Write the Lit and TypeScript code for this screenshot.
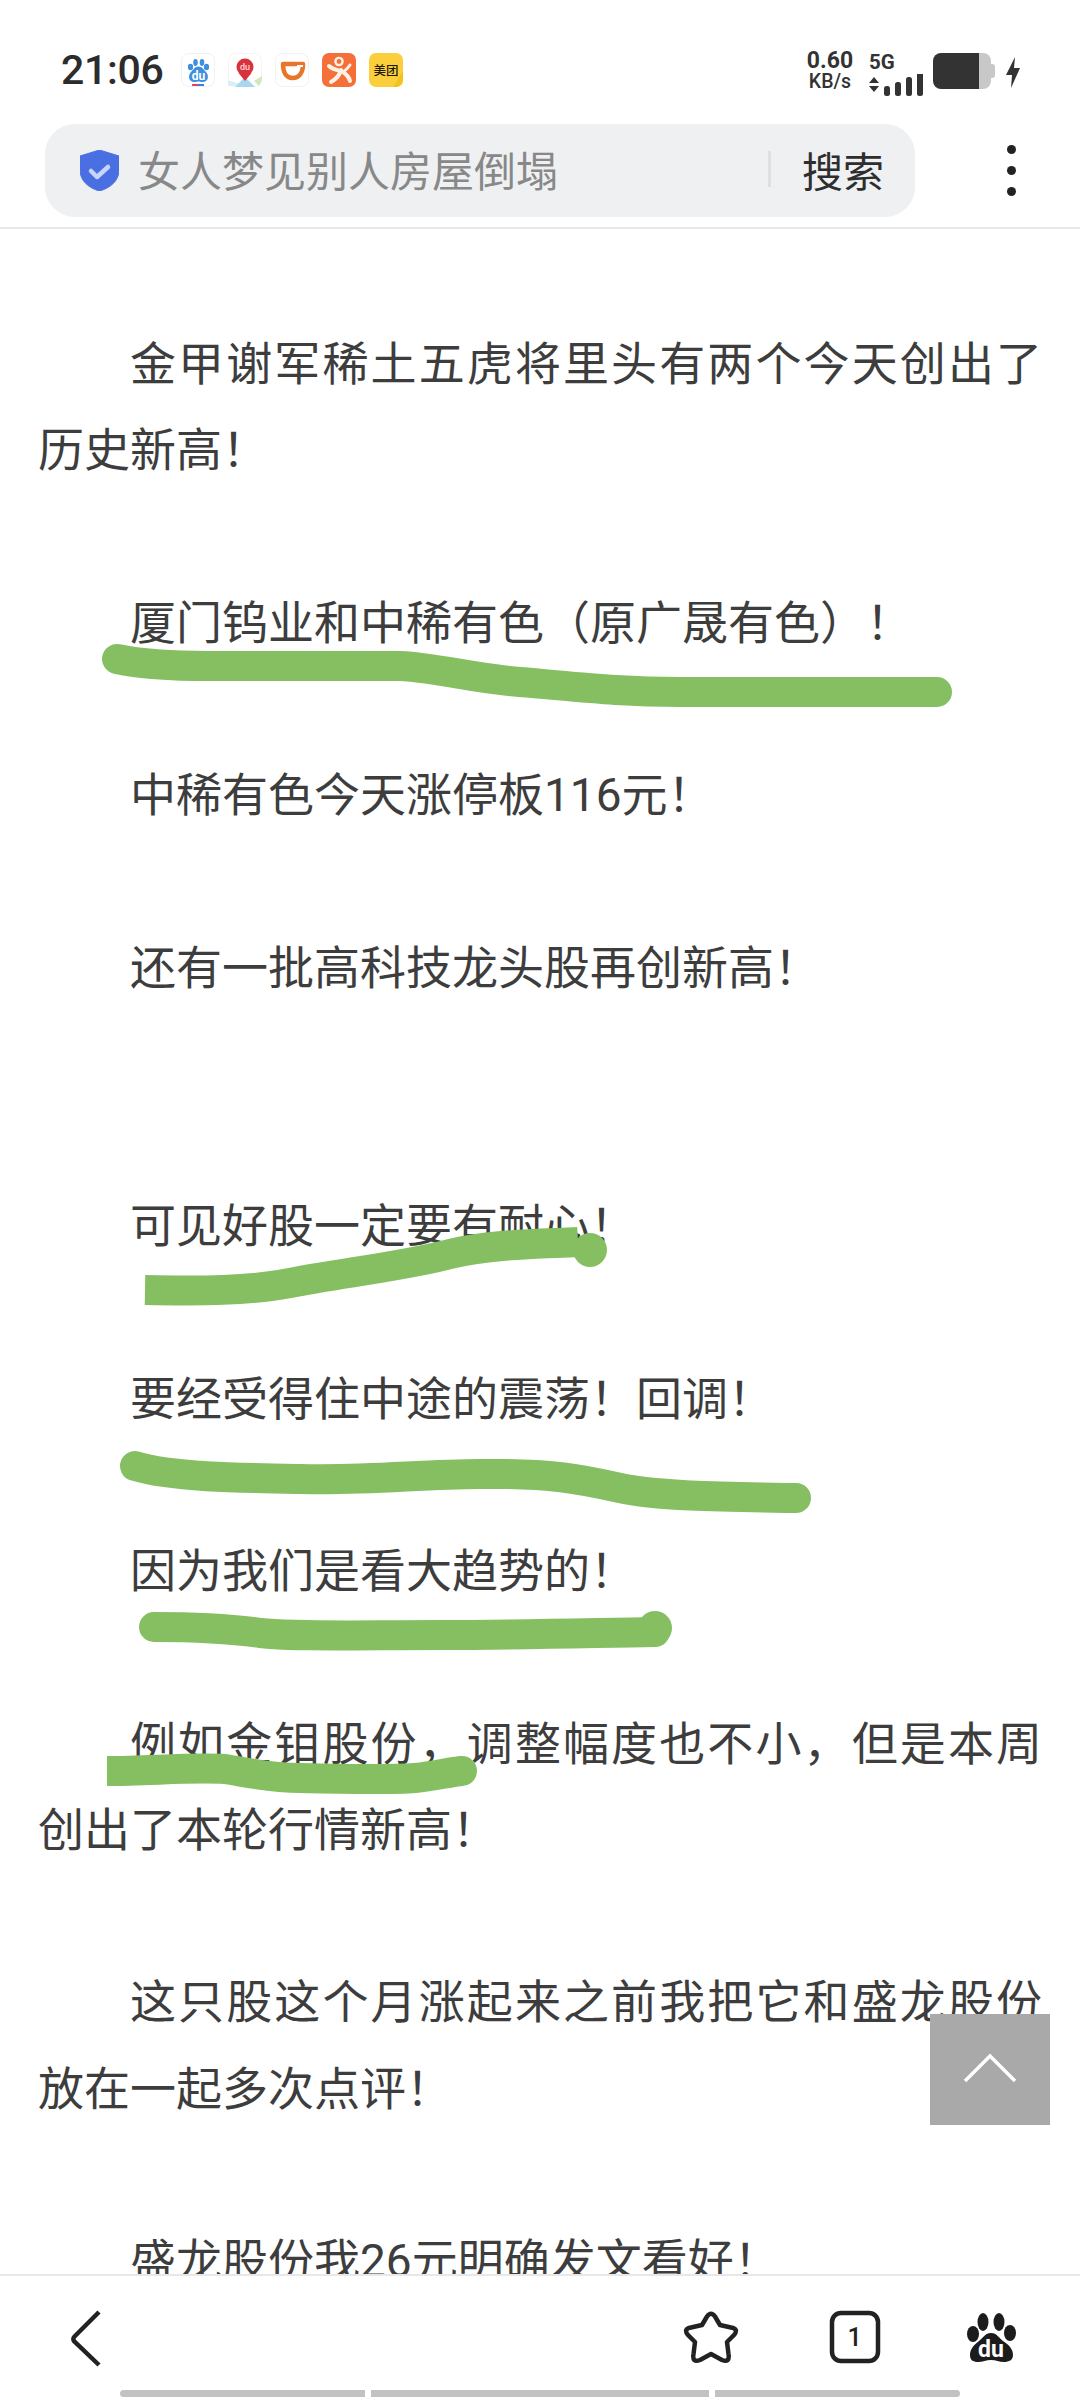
import { LitElement, html, css, svg } from "lit";
import { customElement } from "lit/decorators.js";

const paragraphs: (string | null)[] = [
  "金甲谢军稀土五虎将里头有两个今天创出了历史新高！",
  "厦门钨业和中稀有色（原广晟有色）！",
  "中稀有色今天涨停板116元！",
  "还有一批高科技龙头股再创新高！",
  null,
  "可见好股一定要有耐心！",
  "要经受得住中途的震荡！回调！",
  "因为我们是看大趋势的！",
  "例如金钼股份，调整幅度也不小，但是本周创出了本轮行情新高！",
  "这只股这个月涨起来之前我把它和盛龙股份放在一起多次点评！",
  "盛龙股份我26元明确发文看好！",
];

@customElement("app-root")
export class AppRoot extends LitElement {
  static styles = css`
    :host {
      display: block;
      position: relative;
      width: 1080px;
      height: 2400px;
      overflow: hidden;
      background: #fff;
      font-family: "Noto Sans CJK SC", "Noto Sans", sans-serif;
      color: #333;
    }
    .page { display: flex; flex-direction: column; height: 2400px; }
    .status { height: 124px; box-sizing: border-box; padding: 53px 60px 0 61px; display: flex; flex: none; }
    .time { font: 500 41px/34px Roboto, sans-serif; color: #2c2c2c; width: 120px; letter-spacing: -0.3px; }
    .apps { display: flex; gap: 13px; height: 34px; }
    .apps svg { width: 34px; height: 34px; display: block; }
    .spacer { flex: 1; }
    .net { width: 50px; display: flex; flex-direction: column; align-items: center; font-family: Roboto, sans-serif; color: #333; margin: -3px 11px 0 -3px; white-space: nowrap; }
    .net b { font: 700 23px/22px Roboto, sans-serif; }
    .net span { font: 500 19.500px/16px Roboto, sans-serif; margin-top: 2px; }
    .sig { width: 55px; margin-right: 9px; margin-left: 3px; }
    .sig .g { font: 700 20.500px/19px Roboto, sans-serif; color: #333; display: block; }
    .sig svg { display: block; margin-top: 2px; }
    .batt { display: block; margin-right: 10px; }
    .toolbar { height: 105px; flex: none; box-sizing: border-box; border-bottom: 2px solid #e8e8e8; display: flex; align-items: flex-start; padding-left: 45px; }
    .pill { width: 870px; height: 93px; background: #eff0f2; border-radius: 30px; display: flex; align-items: center; box-sizing: border-box; padding: 0 0 3px 35px; flex: none; }
    .pill svg { display: block; flex: none; margin-top: 3px; }
    .ph { font-size: 42px; color: #888; margin-left: 19px; width: 630px; white-space: nowrap; line-height: 60px; }
    .div { width: 3px; height: 36px; background: #dedfe1; flex: none; }
    .go { font-size: 41px; color: #2e2e2e; margin-left: 31px; white-space: nowrap; line-height: 60px; }
    .dots { width: 9px; margin: 21px 0 0 92px; display: flex; flex-direction: column; gap: 12px; }
    .dots i { width: 9px; height: 9px; border-radius: 50%; background: #222; display: block; }
    .content { flex: 1; overflow: hidden; box-sizing: border-box; padding: 92px 38px 0; min-height: 0; font-family: Roboto, "Noto Sans CJK SC", sans-serif; }
    .content p { margin: 0 0 86px; font-size: 46px; line-height: 86.4px; text-indent: 92px; text-align: justify; color: #3d3d3d; }
    .content p.blank { margin: 0; height: 86.4px; }
    .nav { height: 126px; flex: none; box-sizing: border-box; border-top: 2px solid #e8e8e8; background: #fff; position: relative; z-index: 3; display: flex; flex-direction: column; }
    .icons { display: flex; align-items: flex-start; padding: 34px 0 0 70px; height: 80px; box-sizing: border-box; flex: none; }
    .icons svg { display: block; flex: none; }
    .bars { display: flex; gap: 6px; padding-left: 120px; margin-top: 34px; }
    .bars i { display: block; height: 7px; background: #c2c2c2; }
    .bars i:first-child { width: 245px; border-radius: 4px 0 0 4px; }
    .bars i:nth-child(2) { width: 338px; }
    .bars i:last-child { width: 245px; border-radius: 0 4px 4px 0; }
    .ink { position: absolute; inset: 0; width: 1080px; height: 2400px; z-index: 1; pointer-events: none; }
    .top { position: absolute; left: 930px; top: 2014px; width: 120px; height: 111px; background: #a9a9a9; z-index: 2; display: flex; align-items: center; justify-content: center; }
    .top svg { display: block; margin-bottom: 4px; }
    .star { margin-left: 580px; }
    .tab { margin-left: 89px; }
    .paw { margin-left: 82px; }
  `;

  private appIcons() {
    return html`
      <div class="apps">
        <svg viewBox="0 0 34 34">
          <rect x=".5" y=".5" width="33" height="33" rx="7" fill="#fff" stroke="#f0f0f0"/>
          <g fill="#3d8fe0">
            <ellipse cx="9.500" cy="14" rx="2.600" ry="3.200"/><ellipse cx="14.500" cy="9.500" rx="2.300" ry="3.400"/>
            <ellipse cx="21" cy="9.500" rx="2.300" ry="3.400"/><ellipse cx="25.500" cy="14" rx="2.600" ry="3.200"/>
            <path d="M17.500 13.500c3.500 0 5 3 7.500 5.500 3 3 3 10-3.500 10-2 0-2.500-.6-4-.6s-2.500.6-4 .6c-6.500 0-6.500-7-3.500-10 2.500-2.500 4-5.500 7.500-5.500z"/>
          </g>
          <text x="17.500" y="27" text-anchor="middle" font-family="Roboto" font-weight="700" font-size="12" fill="#fff">du</text>
          <rect x="11" y="31" width="6" height="2" fill="#e0475a"/><rect x="17" y="31" width="6" height="2" fill="#4a76d8"/>
        </svg>
        <svg viewBox="0 0 34 34">
          <rect x=".5" y=".5" width="33" height="33" rx="7" fill="#fff" stroke="#f4f4f4"/>
          <path d="M0 27 17 33H0z" fill="#d8eef8"/><path d="M7 34 17 24l10 10z" fill="#a8d8f0"/><path d="M26 28l8-5v4l-3 6z" fill="#cfe8c0"/>
          <circle cx="17" cy="14" r="8.500" fill="#d8323f"/><path d="M10.500 20l6.500 8 6.500-8z" fill="#d8323f"/>
          <text x="17" y="17" text-anchor="middle" font-family="Roboto" font-size="9" font-weight="500" fill="#ffd5d5">du</text>
        </svg>
        <svg viewBox="0 0 34 34">
          <rect x=".5" y=".5" width="33" height="33" rx="7" fill="#fff" stroke="#f2f2f2"/>
          <path d="M8 11h20c0 9-4 14-10.500 14C11 25 8 19 8 11z" fill="none" stroke="#e8762a" stroke-width="4.500" stroke-linejoin="round"/>
          <path d="M22 12h6v2h-6z" fill="#fff"/>
        </svg>
        <svg viewBox="0 0 34 34">
          <rect width="34" height="34" rx="7" fill="#f56f38"/>
          <circle cx="17" cy="8.500" r="3.600" fill="none" stroke="#fdf1e6" stroke-width="2.400"/>
          <path d="M7 13C11 17 17 17 21 19 24 21 27 24 28 28" fill="none" stroke="#fdf1e6" stroke-width="4" stroke-linecap="round"/>
          <path d="M19 17C18 22 14 26 9 29" fill="none" stroke="#fdf1e6" stroke-width="4" stroke-linecap="round"/>
          <path d="M21 19C24 17 26 15 28 12" fill="none" stroke="#fdf1e6" stroke-width="3" stroke-linecap="round"/>
        </svg>
        <svg viewBox="0 0 34 34">
          <rect width="34" height="34" rx="7" fill="#fbcf3c"/>
          <path d="M34 18v9a7 7 0 0 1-7 7h-3z" fill="#f4c21c"/>
          <text x="17" y="21.500" text-anchor="middle" font-family="Noto Sans CJK SC" font-size="12.500" font-weight="500" fill="#1f1a05">美团</text>
        </svg>
      </div>`;
  }

  render() {
    return html`
      <div class="page">
        <div class="status">
          <div class="time">21:06</div>
          ${this.appIcons()}
          <div class="spacer"></div>
          <div class="net"><b>0.60</b><span>KB/s</span></div>
          <div class="sig">
            <span class="g">5G</span>
            <svg width="55" height="24" viewBox="0 0 55 24">
              <path d="M0 8l5-6 5 6zM0 11l5 6 5-6z" fill="#333" transform="translate(0 1)"/>
              <rect x="15" y="12" width="6" height="10" rx="2.500" fill="#333"/>
              <rect x="26" y="8" width="6" height="14" rx="2.500" fill="#333"/>
              <rect x="37" y="3" width="6" height="19" rx="2.500" fill="#333"/>
              <rect x="48" y="-2" width="6" height="24" rx="2.500" fill="#333"/>
            </svg>
          </div>
          <svg class="batt" width="63" height="36" viewBox="0 0 63 36">
            <path d="M46 0h4a8 8 0 0 1 8 8v20a8 8 0 0 1-8 8h-4z" fill="#c8c8c8"/>
            <path d="M58 11h1a3 3 0 0 1 3 3v8a3 3 0 0 1-3 3h-1z" fill="#c8c8c8"/>
            <path d="M8 0h38v36H8a8 8 0 0 1-8-8V8a8 8 0 0 1 8-8z" fill="#333"/>
          </svg>
          <svg width="14" height="36" viewBox="0 0 14 36"><path d="M9 4 0 22h6l-1 13 9-20H8z" fill="#333"/></svg>
        </div>
        <div class="toolbar">
          <div class="pill">
            <svg width="39" height="41" viewBox="0 0 39 41">
              <path d="M19.500 0 39 6v14c0 11-9 18-19.500 21C9 38 0 31 0 20V6z" fill="#4a6fe3" stroke="#4a6fe3" stroke-linejoin="round"/>
              <path d="M11 21l6 6 11-10" fill="none" stroke="#c9d4fb" stroke-width="4.500" stroke-linecap="round" stroke-linejoin="round"/>
            </svg>
            <div class="ph">女人梦见别人房屋倒塌</div>
            <div class="div"></div>
            <div class="go">搜索</div>
          </div>
          <div class="dots"><i></i><i></i><i></i></div>
        </div>
        <div class="content">
          ${paragraphs.map((p) => (p === null ? html`<p class="blank"></p>` : html`<p>${p}</p>`))}
        </div>
        <div class="nav">
          <div class="icons">
            <svg width="32" height="57" viewBox="0 0 32 57">
              <path d="M29 2 4.500 26.500Q2.500 28.500 4 31L29 55" fill="none" stroke="#222" stroke-width="4.500"/>
            </svg>
            <svg class="star" width="57" height="57" viewBox="-2 0 57 57">
              <path d="M23 6.500Q27 1 31 6.500L36 15 47 17.500Q55 19 50 25L43 32 44.500 44Q46 53 38 50L27 44 16 50Q8 53 9.500 44L11 32 4 25Q-1 19 7 17.500L18 15z" fill="none" stroke="#222" stroke-width="4.500" stroke-linejoin="round"/>
            </svg>
            <svg class="tab" width="54" height="55" viewBox="0 0 54 55">
              <rect x="4" y="3" width="46" height="48" rx="9" fill="none" stroke="#222" stroke-width="4.500"/>
              <text x="26.500" y="36" text-anchor="middle" font-family="Roboto" font-weight="500" font-size="25" fill="#222">1</text>
            </svg>
            <svg class="paw" width="54" height="57" viewBox="0 0 54 57">
              <g fill="#1c1c1c">
                <ellipse cx="9" cy="24" rx="6" ry="8"/><ellipse cx="19" cy="12" rx="5.500" ry="9"/>
                <ellipse cx="35" cy="12" rx="5.500" ry="9"/><ellipse cx="46" cy="23" rx="6" ry="8"/>
                <path d="M27 23C33 23 35 28 39 31 45 35 49 39 49 45 49 50 45 52 40 52 35 52 32 50 27 50 22 50 19 52 14 52 9 52 6 50 6 45 6 39 10 35 15 31 19 28 21 23 27 23z"/>
              </g>
              <text x="27" y="47" text-anchor="middle" font-family="Roboto" font-weight="700" font-size="23" fill="#fff">du</text>
            </svg>
          </div>
          <div class="bars"><i></i><i></i><i></i></div>
        </div>
      </div>
      <svg class="ink" viewBox="0 0 1080 2400">
        ${svg`<g fill="none" stroke="#85bf62" stroke-width="30" stroke-linecap="round" stroke-linejoin="round">
          <path d="M117 659C140 664 170 666 210 666L400 666C440 668 470 678 520 682 580 687 620 692 680 692L937 692"/>
          <path d="M145 1290C200 1291 250 1291 290 1283 340 1273 400 1267 450 1254 490 1244 540 1244 578 1242" stroke-linecap="butt"/>
          <path d="M135 1466C170 1477 240 1478 300 1479 370 1481 420 1474 480 1474 550 1473 580 1479 620 1488 660 1497 740 1497 796 1498"/>
          <path d="M154 1627C190 1627 225 1628 260 1633 300 1637 360 1635 440 1635 520 1635 590 1633 655 1632"/>
          <path d="M107 1771C150 1771 190 1767 225 1769 250 1773 270 1778 300 1778 340 1779 390 1780 415 1778 435 1776 450 1772 462 1771" stroke-linecap="butt"/>
        </g>
        <g fill="#85bf62">
          <circle cx="590" cy="1250" r="17"/><circle cx="655" cy="1628" r="17"/><circle cx="462" cy="1771" r="15"/>
        </g>`}
      </svg>
      <div class="top">
        <svg width="54" height="30" viewBox="0 0 54 30"><path d="M2 28 27 3l25 25" fill="none" stroke="#fff" stroke-width="3.500"/></svg>
      </div>
    `;
  }
}
